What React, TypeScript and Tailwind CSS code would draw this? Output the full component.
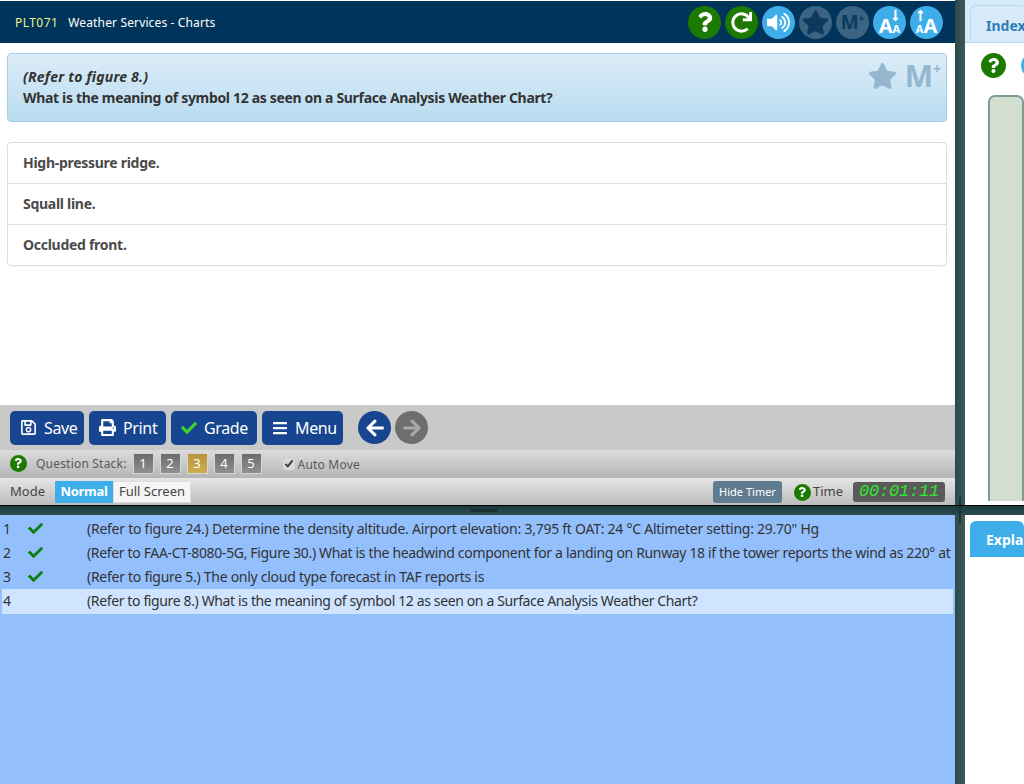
import React from "react";
import { FaArrowLeft, FaArrowRight, FaBars, FaCheck, FaLongArrowAltDown, FaLongArrowAltUp, FaPrint, FaQuestion, FaRedo, FaRegSave, FaStar, FaVolumeUp } from "react-icons/fa";

const font = { fontFamily: '"Noto Sans", sans-serif' };

function Round({ bg, children }: { bg: string; children: React.ReactNode }) {
  return <div className={`relative flex h-[33px] w-[33px] items-center justify-center rounded-full text-white ${bg}`}>{children}</div>;
}

function Help({ size }: { size: string }) {
  return (
    <div className={`flex shrink-0 items-center justify-center rounded-full bg-[#1c7a00] text-white ${size}`}>
      <FaQuestion className="h-[60%] w-[60%]" />
    </div>
  );
}

function ActionButton({ icon, label, width }: { icon: React.ReactNode; label: string; width: string }) {
  return (
    <button className={`flex h-[34px] items-center gap-[7px] rounded-[5px] bg-[#17458f] pl-[10px] text-[16px] tracking-[-0.35px] text-white ${width}`}>
      {icon}
      <span>{label}</span>
    </button>
  );
}

function AnswerRow({ text, last }: { text: string; last?: boolean }) {
  return (
    <div className={`flex items-center px-[15px] pb-[2px] text-[14px] font-bold tracking-[-0.28px] text-[#4a4a4a] ${last ? "h-[40px]" : "h-[41px] border-b border-[#dddddd]"}`}>
      {text}
    </div>
  );
}

function StackNum({ n, active }: { n: number; active?: boolean }) {
  return (
    <div className={`flex h-[21px] w-[21px] items-center justify-center border border-[#d5d5d5] bg-gradient-to-b text-[13px] text-white ${active ? "from-[#b8953a] to-[#d0ab50]" : "from-[#6c6c6c] to-[#909090]"}`}>{n}</div>
  );
}

const rows = [
  { n: 1, ok: true, track: "tracking-[-0.25px]", t: "(Refer to figure 24.) Determine the density altitude. Airport elevation: 3,795 ft OAT: 24 °C Altimeter setting: 29.70\" Hg" },
  { n: 2, ok: true, track: "tracking-[-0.34px]", t: "(Refer to FAA-CT-8080-5G, Figure 30.) What is the headwind component for a landing on Runway 18 if the tower reports the wind as 220° at" },
  { n: 3, ok: true, track: "tracking-[-0.27px]", t: "(Refer to figure 5.) The only cloud type forecast in TAF reports is" },
  { n: 4, ok: false, track: "tracking-[-0.37px]", t: "(Refer to figure 8.) What is the meaning of symbol 12 as seen on a Surface Analysis Weather Chart?" },
];

export default function App() {
  return (
    <div className="flex h-[784px] w-[1024px] flex-col overflow-hidden bg-white text-[#333333]" style={font}>
      <div className="flex h-[505px] shrink-0">
        <div className="flex w-[955px] shrink-0 flex-col">
          <div className="mt-px flex h-[42px] shrink-0 items-center justify-between bg-[#01345b] pl-[15px] pr-[12px]">
            <div className="mt-[2px] flex items-center gap-[10px] text-[12px]">
              <span className="tracking-[0.45px] text-[#e8f58a]">PLT071</span>
              <span className="tracking-[0.14px] text-white">Weather Services - Charts</span>
            </div>
            <div className="flex items-center gap-[4px]">
              <Round bg="bg-[#1c7a00]"><FaQuestion className="h-[20px] w-[20px]" /></Round>
              <Round bg="bg-[#1c7a00]"><FaRedo className="h-[21px] w-[21px]" /></Round>
              <Round bg="bg-[#3daee9]"><FaVolumeUp className="h-[23px] w-[23px]" /></Round>
              <Round bg="bg-[#3b6483]"><FaStar className="h-[27px] w-[27px] text-[#0c3a5f]" /></Round>
              <Round bg="bg-[#3b6483]">
                <span className="text-[19px] leading-none font-bold text-[#0c3a5f]">M</span>
                <span className="mb-[8px] text-[10px] leading-none font-bold text-[#0c3a5f]">+</span>
              </Round>
              <Round bg="bg-[#3daee9]">
                <span className="mt-[7px] text-[20px] leading-none font-bold">A</span>
                <span className="mt-[13px] text-[11px] leading-none font-bold">A</span>
                <FaLongArrowAltDown className="absolute right-[6px] top-[3px] h-[13px] w-[9px]" />
              </Round>
              <Round bg="bg-[#3daee9]">
                <span className="mt-[13px] text-[11px] leading-none font-bold">A</span>
                <span className="mt-[7px] text-[20px] leading-none font-bold">A</span>
                <FaLongArrowAltUp className="absolute left-[6px] top-[3px] h-[13px] w-[9px]" />
              </Round>
            </div>
          </div>

          <div className="ml-[7px] mr-[8px] mt-[10px] flex h-[69px] shrink-0 items-start justify-between rounded-[4px] border border-[#a6cfe6] bg-gradient-to-b from-[#dcedf8] to-[#b8dcf0] pl-[15px] pr-[5px]">
            <div className="pt-[12px] text-[14px] leading-[21px] font-bold text-[#333333]">
              <div className="italic tracking-[0.2px]">(Refer to figure 8.)</div>
              <div className="tracking-[-0.33px]">What is the meaning of symbol 12 as seen on a Surface Analysis Weather Chart?</div>
            </div>
            <div className="flex items-center gap-[8px] pt-[7px] text-[#95b6cf]">
              <FaStar className="h-[28px] w-[29px]" />
              <div className="flex items-start font-bold leading-none">
                <span className="text-[30px]">M</span>
                <span className="mt-[1px] text-[14px]">+</span>
              </div>
            </div>
          </div>

          <div className="ml-[7px] mr-[8px] mt-[20px] shrink-0 rounded-[4px] border border-[#dddddd] shadow-[0_1px_1px_rgba(0,0,0,0.05)]">
            <AnswerRow text="High-pressure ridge." />
            <AnswerRow text="Squall line." />
            <AnswerRow text="Occluded front." last />
          </div>

          <div className="flex-1" />

          <div className="flex h-[45px] shrink-0 items-center gap-[5px] bg-[#c9c9c9] pl-[10px]">
            <ActionButton width="w-[74px]" icon={<FaRegSave className="h-[17px] w-[17px]" />} label="Save" />
            <ActionButton width="w-[77px]" icon={<FaPrint className="h-[17px] w-[17px]" />} label="Print" />
            <ActionButton width="w-[86px]" icon={<FaCheck className="h-[16px] w-[16px] text-[#3fd12f]" />} label="Grade" />
            <ActionButton width="w-[81px]" icon={<FaBars className="h-[16px] w-[16px]" />} label="Menu" />
            <div className="ml-[10px] flex gap-[4px]">
              <div className="flex h-[33px] w-[33px] items-center justify-center rounded-full bg-[#17458f] text-white"><FaArrowLeft className="h-[20px] w-[20px]" /></div>
              <div className="flex h-[33px] w-[33px] items-center justify-center rounded-full bg-[#6e6e6e] text-[#a9a9a9]"><FaArrowRight className="h-[20px] w-[20px]" /></div>
            </div>
          </div>

          <div className="flex h-[28px] shrink-0 items-center bg-gradient-to-b from-[#dcdcdc] to-[#b5b5b5] pb-px pl-[10px] text-[12px] text-[#5a5a5a]">
            <Help size="h-[17px] w-[17px]" />
            <span className="ml-[9px] mr-[6px] tracking-[0.2px]">Question Stack:</span>
            <div className="flex gap-[6px]">
              <StackNum n={1} />
              <StackNum n={2} />
              <StackNum n={3} active />
              <StackNum n={4} />
              <StackNum n={5} />
            </div>
            <input type="checkbox" defaultChecked className="ml-[21px] h-[12px] w-[12px] accent-[#d8d8d8]" />
            <span className="ml-[3px] mt-[2px] tracking-[0.2px]">Auto Move</span>
          </div>

          <div className="flex h-[27px] shrink-0 items-center bg-gradient-to-b from-[#e6e6e6] to-[#bcbcbc] pl-[10px] pr-[10px] pt-px text-[13px] text-[#444444]">
            <span className="mr-[10px]">Mode</span>
            <div className="flex h-[22px] items-stretch">
              <div className="flex w-[58px] items-center justify-center bg-[#3daee9] font-bold tracking-[-0.3px] text-white">Normal</div>
              <div className="flex w-[78px] items-center justify-center border border-[#dddddd] bg-[#f5f5f5] text-[#444444]">Full Screen</div>
            </div>
            <div className="ml-auto flex items-center">
              <button className="flex h-[22px] items-center rounded-[3px] bg-[#5f7d8f] px-[6px] text-[11px] text-white">Hide Timer</button>
              <div className="ml-[12px]"><Help size="h-[17px] w-[17px]" /></div>
              <span className="ml-[2px]">Time</span>
              <div className="ml-[10px] flex h-[20px] w-[92px] items-center justify-center rounded-[3px] bg-[#5a5a5a] text-[17px] italic tracking-[-0.2px] text-[#2ee82e]" style={{ fontFamily: '"Liberation Mono", monospace' }}>00:01:11</div>
            </div>
          </div>
        </div>

        <div className="relative w-[10px] shrink-0 bg-gradient-to-r from-[#2c4a4c] to-[#3f5858]">
          <div className="absolute bottom-0 left-[4px] h-[8px] w-[2px] bg-[#1c3436]" />
        </div>

        <div className="flex min-w-0 flex-1 flex-col">
          <div className="flex h-[43px] shrink-0 items-end border-b border-[#b5d8ee] bg-[#d6eafa] pl-[5px] pt-[6px]">
            <div className="flex h-[37px] flex-1 items-center rounded-t-[6px] border-l border-t border-[#b5d8ee] pl-[15px] pt-[2px] text-[14px] font-bold whitespace-nowrap text-[#2f7db5]">Index</div>
          </div>
          <div className="flex h-[44px] shrink-0 items-center gap-[15px] pl-[16px] pt-[1px]">
            <Help size="h-[25px] w-[25px]" />
            <div className="h-[25px] w-[25px] shrink-0 rounded-full bg-[#3daee9]" />
          </div>
          <div className="mb-[4px] ml-[23px] mt-[8px] flex-1 rounded-t-[7px] border-2 border-b-0 border-[#7e9a94] bg-[#d2dfcf]" />
        </div>
      </div>

      <div className="relative h-[10px] shrink-0 border-t border-black bg-gradient-to-b from-[#1b3a3e] to-[#2c4c4e]">
        <div className="absolute left-[471px] top-[3px] h-[3px] w-[26px] bg-[#1a3033]" />
        <div className="absolute left-[959px] top-0 h-[9px] w-[2px] bg-[#1c3436]" />
      </div>

      <div className="flex min-h-0 flex-1">
        <div className="w-[955px] shrink-0 bg-[#93c0fd] pl-[2px] pr-[2px] pt-[2px] text-[14px] text-[#333333]">
          {rows.map((r) => (
            <div key={r.n} className={`flex items-center overflow-hidden whitespace-nowrap ${r.ok ? "h-[24px] pb-[2px]" : "h-[25px] bg-[#cfe4fe] pb-[3px]"}`}>
              <span className="w-[26px] shrink-0 pl-px">{r.n}</span>
              <span className="w-[59px] shrink-0 text-[#0f7f14]">{r.ok && <FaCheck className="h-[15px] w-[15px]" />}</span>
              <span className={r.track}>{r.t}</span>
            </div>
          ))}
        </div>
        <div className="relative w-[10px] shrink-0 bg-gradient-to-r from-[#2c4a4c] to-[#3f5858]">
          <div className="absolute left-[4px] top-0 h-[8px] w-[2px] bg-[#1c3436]" />
        </div>
        <div className="min-w-0 flex-1 overflow-hidden pl-[5px] pt-[6px]">
          <div className="flex h-[36px] items-center rounded-t-[6px] bg-[#3daee9] pl-[16px] text-[14px] font-bold whitespace-nowrap text-white">Explanation</div>
        </div>
      </div>
    </div>
  );
}
